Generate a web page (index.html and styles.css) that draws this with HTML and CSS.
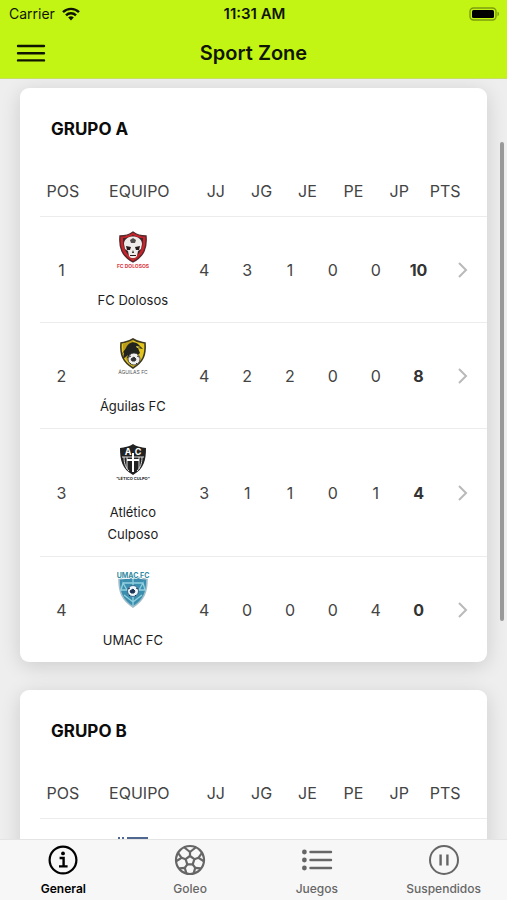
FILE: index.html
```html
<!DOCTYPE html>
<html lang="es">
  <head>
    <meta charset="UTF-8" />
    <meta name="viewport" content="width=device-width, initial-scale=1.0" />
    <title>Sport Zone</title>
    <link rel="stylesheet" href="styles.css">
  </head>

  <body>
    <header class="header">
      <div class="status">
        <div class="carrier">
          <span>Carrier</span>
          <svg width="18" height="14" viewBox="0 0 18 14" fill="none" stroke="#101500" stroke-width="2.4">
            <path d="M1 5.2a11.4 11.4 0 0 1 16 0" />
            <path d="M4 8.4a7 7 0 0 1 10 0" />
            <path d="M9 13.4 6.2 10.6a4 4 0 0 1 5.6 0z" fill="#101500" stroke="none" />
          </svg>
        </div>
        <div class="time">11:31 AM</div>
        <svg class="battery" width="31" height="14" viewBox="0 0 31 14">
          <rect x="1" y="1" width="26" height="12" rx="3.5" fill="none" stroke="#7d9c10" stroke-width="1.4" />
          <rect x="3" y="3" width="22" height="8" rx="1.5" fill="#000" />
          <path d="M28.5 4.8c2 .6 2 3.8 0 4.4z" fill="#7d9c10" />
        </svg>
      </div>
      <div class="toolbar">
        <button class="menu" aria-label="Menú">
          <svg width="30" height="20" viewBox="0 0 30 20" stroke="#101500" stroke-width="2.4" stroke-linecap="round">
            <path d="M2 3h26M2 10.2h26M2 17.4h26" />
          </svg>
        </button>
        <h1>Sport Zone</h1>
      </div>
    </header>

    <main class="content">
      <section class="card">
        <h2>GRUPO A</h2>
        <table>
          <thead>
            <tr><th>POS</th><th>EQUIPO</th><th>JJ</th><th>JG</th><th>JE</th><th>PE</th><th>JP</th><th>PTS</th></tr>
          </thead>
          <tbody>
            <tr>
              <td>1</td>
              <td class="team">
                <svg class="crest" viewBox="0 0 42 42">
                  <path d="M21 2c4 3 8 4 13 4 1 12-2 20-13 26C10 26 7 18 8 6c5 0 9-1 13-4z" fill="#c9232b" stroke="#54282b" stroke-width="1.4" />
                  <path d="M21 5c3 2 6 3 10 3 0 10-2 15-10 21C13 23 11 18 11 8c4 0 7-1 10-3z" fill="#40272a" />
                  <path d="M12 14c0-10 18-10 18 0l-1 5-3 2-1 5c-2 3-6 3-8 0l-1-5-3-2z" fill="#efebea" />
                  <path d="M14 16l5 1-1 3-3 0zM28 16l-5 1 1 3 3 0zM21 20l1 3h-2zM18 25h6v1h-6z" fill="#241a1c" />
                  <path d="M21 8l3 2-1 3h-4l-1-3z" fill="#514a4b" />
                  <text x="21" y="38" font-size="5" font-weight="700" fill="#dc3540" text-anchor="middle">FC DOLOSOS</text>
                </svg>
                <span>FC Dolosos</span>
              </td>
              <td>4</td><td>3</td><td>1</td><td>0</td><td>0</td><td class="points">10</td>
              <td><a href="#dolosos" aria-label="FC Dolosos"><svg class="chevron" viewBox="0 0 11 18"><path d="M2 2l7 7-7 7" /></svg></a></td>
            </tr>
            <tr>
              <td>2</td>
              <td class="team">
                <svg class="crest" viewBox="0 0 42 42">
                  <path d="M21 3c4 3 7 3 12 4 1 12-2 19-12 25C11 26 8 19 9 7c5-1 8-1 12-4z" fill="#e2c51f" stroke="#3d3920" stroke-width="1.6" />
                  <path d="M21 4v26C13 25 11 18 11 8z" fill="#b99d1b" />
                  <path d="M14 12c2-6 9-8 13-3l4 4-5-1 2 5-4 4-9 1 1-3-5 4 1-7-3 3z" fill="#22251f" />
                  <path d="M24 10l5 1-4 1z" fill="#f3de55" />
                  <circle cx="22" cy="23" r="6" fill="#eee" stroke="#333" stroke-width=".8" />
                  <path d="M22 21l2 2-1 2h-3l-1-2zM17 21l2-1M25 20l2 1M24 27l1 1M19 27l-1 1" fill="#333" stroke="#333" />
                  <text x="21" y="38" font-size="5" fill="#555" text-anchor="middle">ÁGUILAS FC</text>
                </svg>
                <span>Águilas FC</span>
              </td>
              <td>4</td><td>2</td><td>2</td><td>0</td><td>0</td><td class="points">8</td>
              <td><a href="#aguilas" aria-label="Águilas FC"><svg class="chevron" viewBox="0 0 11 18"><path d="M2 2l7 7-7 7" /></svg></a></td>
            </tr>
            <tr>
              <td>3</td>
              <td class="team">
                <svg class="crest" viewBox="0 0 42 42">
                  <path d="M21 2c4 3 8 3 13 4 0 12-2 21-13 27C10 27 8 18 8 6c5-1 9-1 13-4z" fill="#222" />
                  <path d="M10 15h22M12 15c0 7 2 11 5 14M15 15v12M27 15v12M30 15c0 7-2 11-5 14" fill="none" stroke="#ddd" stroke-width="1" />
                  <path d="M20 11h2v6h5v2h-5v11h-2V19h-5v-2h5z" fill="#fff" />
                  <text x="16" y="13" font-size="9" font-weight="700" fill="#fff" text-anchor="middle">A</text>
                  <text x="26" y="13" font-size="9" font-weight="700" fill="#fff" text-anchor="middle">C</text>
                  <text x="21" y="38" font-size="4" font-weight="700" fill="#222" text-anchor="middle">"LÉTICO CULPO"</text>
                </svg>
                <span>Atlético Culposo</span>
              </td>
              <td>3</td><td>1</td><td>1</td><td>0</td><td>1</td><td class="points">4</td>
              <td><a href="#atletico" aria-label="Atlético Culposo"><svg class="chevron" viewBox="0 0 11 18"><path d="M2 2l7 7-7 7" /></svg></a></td>
            </tr>
            <tr>
              <td>4</td>
              <td class="team">
                <svg class="crest" viewBox="0 0 42 42">
                  <path d="M7 9c5 0 9-1 14-4 5 3 9 4 14 4 0 13-3 21-14 28C10 30 7 22 7 9z" fill="#3b8eae" stroke="#a1bdc9" stroke-width="1.6" />
                  <path d="M11 13h20M21 9v27M11 13l-2 7h6zM31 13l-4 7h6zM12 25l9 7 9-7" fill="none" stroke="#91d1df" stroke-width="1.3" />
                  <circle cx="21" cy="21" r="5.5" fill="#edf6fb" stroke="#285477" stroke-width=".8" />
                  <path d="M21 19l2 2-1 2h-3l-1-2zM16 19l2-1M24 18l2 1M23 25l1 1M18 25l-1 1" fill="#1d3356" stroke="#1d3356" />
                  <text x="21" y="8" font-size="7" font-weight="700" fill="#328b9f" stroke="#fff" stroke-width="1.4" paint-order="stroke" text-anchor="middle">UMAC FC</text>
                </svg>
                <span>UMAC FC</span>
              </td>
              <td>4</td><td>0</td><td>0</td><td>0</td><td>4</td><td class="points">0</td>
              <td><a href="#umac" aria-label="UMAC FC"><svg class="chevron" viewBox="0 0 11 18"><path d="M2 2l7 7-7 7" /></svg></a></td>
            </tr>
          </tbody>
        </table>
      </section>

      <section class="card">
        <h2>GRUPO B</h2>
        <table>
          <thead>
            <tr><th>POS</th><th>EQUIPO</th><th>JJ</th><th>JG</th><th>JE</th><th>PE</th><th>JP</th><th>PTS</th></tr>
          </thead>
          <tbody>
            <tr>
              <td></td>
              <td class="team">
                <svg class="crest" viewBox="0 0 42 42">
                  <path d="M6 5h2v6H6zM10 5h2v6h-2zM15 5h21v6H15z" fill="#50688f" />
                </svg>
              </td>
            </tr>
          </tbody>
        </table>
      </section>

      <div class="scrollbar"></div>
    </main>

    <nav class="tabs">
      <a class="tab active" href="#general">
        <svg viewBox="0 0 32 32" fill="none" stroke="currentColor" stroke-width="2.2">
          <circle cx="16" cy="16" r="13.4" />
          <path d="M12.6 14h4v8M12 22.4h8.6" stroke-width="2.4" />
          <circle cx="16" cy="9.4" r="1.9" fill="currentColor" stroke="none" />
        </svg>
        <span>General</span>
      </a>
      <a class="tab" href="#goleo">
        <svg viewBox="0 0 32 32" fill="none" stroke="currentColor" stroke-width="2.2" stroke-linejoin="round">
          <circle cx="16" cy="16" r="14" />
          <path d="M16 12l4.4 3.2-1.7 5.1h-5.4l-1.7-5.1z" />
          <path d="M16 12V8M20.4 15.2l4-1.4M18.7 20.3l2.5 3.5M13.3 20.3l-2.5 3.5M11.6 15.2l-4-1.4" />
          <path d="M10.4 3.5 16 8l5.6-4.5M28 8.9l-3.6 4.9 5.6 3.6M26.7 24.4l-5.5-.6-1.5 5.6M12.3 29.4l-1.5-5.6-5.5.6M2 17.4l5.6-3.6L4 8.9" />
        </svg>
        <span>Goleo</span>
      </a>
      <a class="tab" href="#juegos">
        <svg viewBox="0 0 32 32" fill="none" stroke="currentColor" stroke-width="2.4" stroke-linecap="round">
          <path d="M9.5 8h20.5M9.5 16h20.5M9.5 24h20.5" />
          <g fill="currentColor" stroke="none">
            <circle cx="3.4" cy="8" r="2.4" />
            <circle cx="3.4" cy="16" r="2.4" />
            <circle cx="3.4" cy="24" r="2.4" />
          </g>
        </svg>
        <span>Juegos</span>
      </a>
      <a class="tab" href="#suspendidos">
        <svg viewBox="0 0 32 32" fill="none" stroke="currentColor" stroke-width="2">
          <circle cx="16" cy="16" r="14" />
          <path d="M12.6 10.5v11M19.4 10.5v11" stroke-width="2.4" />
        </svg>
        <span>Suspendidos</span>
      </a>
    </nav>
  </body>
</html>
```

FILE: styles.css
```css
body {
  display: flex;
  flex-direction: column;
  height: 100vh;
  margin: 0;
  font-family: Inter, Roboto, sans-serif;
  color: #444;
  background-color: #eee;
}

.header {
  color: #101500;
  background-color: #c3f514;
}

.status {
  display: grid;
  grid-template-columns: 1fr auto 1fr;
  align-items: center;
  height: 27px;
  padding: 0 7px 0 9px;
  font-size: 14px;
}

.carrier {
  display: flex;
  align-items: center;
  gap: 7px;
}

.time {
  font-size: 15px;
  font-weight: 600;
}

.battery {
  justify-self: end;
}

.toolbar {
  display: grid;
  grid-template-columns: 32px 1fr 32px;
  align-items: center;
  height: 51px;
  padding: 0 16px;
  border-bottom: 1px solid #c4df62;
}

.menu {
  display: flex;
  padding: 0;
  border: 0;
  background: none;
}

h1 {
  margin: 0;
  font-size: 20px;
  font-weight: 600;
  text-align: center;
}

.content {
  position: relative;
  flex: 1;
  min-height: 0;
  overflow: hidden;
  padding: 9px 20px 0;
}

.card {
  margin-bottom: 28px;
  border-radius: 9px;
  background-color: #fff;
  box-shadow: 0 4px 20px rgba(0, 0, 0, 0.14);
}

h2 {
  margin: 0;
  padding: 32px 31px 27px;
  font-size: 17px;
  font-weight: 700;
  line-height: 18px;
  color: #0c0c0c;
}

table {
  display: block;
  margin-left: 20px;
}

thead,
tbody {
  display: block;
}

tr {
  display: grid;
  align-items: center;
  padding-right: 19px;
  border-bottom: 1px solid #ececec;
  text-align: center;
}

thead tr {
  grid-template-columns: 3fr 7fr repeat(6, 3fr);
  height: 51px;
}

tbody tr {
  grid-template-columns: 3fr 7fr repeat(6, 3fr) 28px;
}

tbody tr:last-child {
  border-bottom: 0;
}

th,
td {
  padding: 0;
  font-size: 16px;
  font-weight: 400;
}

.team {
  display: flex;
  flex-direction: column;
  align-items: center;
  gap: 17px;
  padding: 13px 8px 11px;
  font-size: 13px;
  line-height: 22px;
  color: #1c1c1c;
}

.crest {
  width: 42px;
  height: 42px;
}

.points {
  font-weight: 700;
  color: #333;
}

td a {
  display: flex;
  justify-content: flex-end;
}

.chevron {
  width: 11px;
  height: 18px;
  fill: none;
  stroke: #b9b9b9;
  stroke-width: 2;
}

/* overlay thumb, sits above the cards */
.scrollbar {
  position: absolute;
  top: 63px;
  right: 3px;
  width: 4px;
  height: 63%;
  border-radius: 2px;
  background-color: #999;
}

.tabs {
  display: flex;
  height: 60px;
  border-top: 1px solid #e4e4e4;
  background-color: #f7f7f7;
}

.tab {
  display: flex;
  flex: 1;
  flex-direction: column;
  align-items: center;
  gap: 5px;
  padding-top: 4px;
  font-size: 12px;
  font-weight: 500;
  line-height: 16px;
  color: #666;
  text-decoration: none;
}

.tab svg {
  width: 32px;
  height: 32px;
}

.tab.active {
  font-weight: 600;
  color: #000;
}
```
